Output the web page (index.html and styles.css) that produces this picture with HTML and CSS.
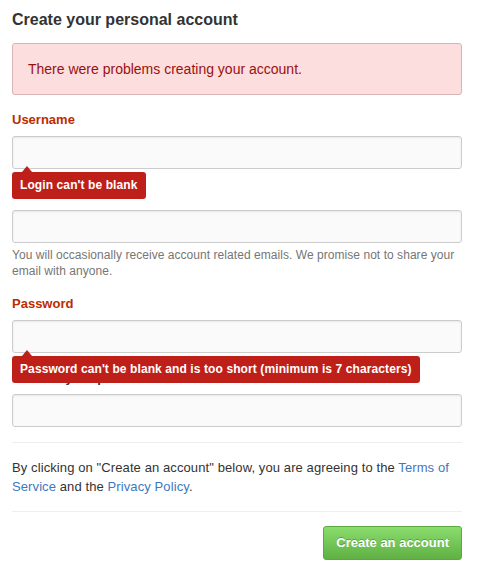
FILE: index.html
```html
<!DOCTYPE html>
<html lang="en">
<head>
<meta charset="utf-8">
<title>Create your personal account</title>
<link rel="stylesheet" href="styles.css">
</head>
<body>
<div class="page">
  <h2 class="title">Create your personal account</h2>
  <div class="flash">There were problems creating your account.</div>

  <div class="field">
    <label class="label label-error" for="user">Username</label>
    <div class="control">
      <input class="input" id="user" type="text">
      <div class="error-tip">Login can't be blank</div>
    </div>
  </div>

  <div class="field">
    <label class="label" for="email">Email Address</label>
    <div class="control">
      <input class="input" id="email" type="text">
    </div>
    <p class="note">You will occasionally receive account related emails. We promise not to share your email with anyone.</p>
  </div>

  <div class="field">
    <label class="label label-error" for="pass">Password</label>
    <div class="control">
      <input class="input" id="pass" type="password">
      <div class="error-tip">Password can't be blank and is too short (minimum is 7 characters)</div>
    </div>
  </div>

  <div class="field">
    <label class="label" for="confirm">Confirm your password</label>
    <div class="control">
      <input class="input" id="confirm" type="password">
    </div>
  </div>

  <hr class="rule">
  <p class="terms">By clicking on "Create an account" below, you are agreeing to the <a href="#">Terms of Service</a> and the <a href="#">Privacy Policy</a>.</p>
  <hr class="rule">

  <div class="actions">
    <button class="btn-primary" type="button">Create an account</button>
  </div>
</div>
</body>
</html>
```

FILE: styles.css
```css
html, body {
  margin: 0;
  padding: 0;
  background: #fff;
}

body {
  font-family: "Liberation Sans", Helvetica, Arial, sans-serif;
  font-size: 14px;
  color: #333;
}

.page {
  width: 450px;
  padding: 10px 0 0 12px;
}

.title {
  margin: 0 0 13px;
  font-size: 16px;
  line-height: 20px;
  font-weight: bold;
  color: #333;
}

.flash {
  padding: 15px;
  font-size: 14px;
  line-height: 20px;
  color: #991111;
  background: #fcdede;
  border: 1px solid #d8b4b4;
  border-radius: 3px;
  margin-bottom: 15px;
}

.field + .field {
  margin-top: 15px;
}

.label {
  display: block;
  font-size: 13px;
  line-height: 20px;
  font-weight: bold;
  color: #333;
  margin-bottom: 6px;
}

.label-error {
  color: #bd2c00;
}

.control {
  position: relative;
}

.input {
  display: block;
  box-sizing: border-box;
  width: 100%;
  height: 33px;
  margin: 0;
  padding: 6px 8px;
  font: inherit;
  background: #fafafa;
  border: 1px solid #ccc;
  border-radius: 3px;
  box-shadow: inset 0 1px 2px rgba(0, 0, 0, 0.075);
  outline: none;
}

.error-tip {
  position: absolute;
  top: calc(100% + 3px);
  left: 0;
  z-index: 2;
  padding: 5px 8px;
  font-size: 12px;
  line-height: 17px;
  font-weight: bold;
  letter-spacing: 0.1px;
  color: #fff;
  white-space: nowrap;
  background: #bf1f19;
  border-radius: 3px;
}

.error-tip::before {
  content: "";
  position: absolute;
  top: -6px;
  left: 10px;
  border-left: 5px solid transparent;
  border-right: 5px solid transparent;
  border-bottom: 6px solid #bf1f19;
}

.note {
  margin: 4px 0 0;
  font-size: 12px;
  line-height: 16px;
  letter-spacing: 0.05px;
  color: #767676;
}

.rule {
  margin: 15px 0;
  border: 0;
  border-top: 1px solid #eee;
  height: 0;
}

.terms {
  margin: 0;
  font-size: 13px;
  line-height: 19px;
  letter-spacing: 0.1px;
  color: #333;
}

.terms a {
  color: #4078c0;
  text-decoration: none;
}

.actions {
  display: flex;
  justify-content: flex-end;
  margin-top: -1px;
}

.btn-primary {
  margin: 0;
  padding: 6px 12px;
  font-family: inherit;
  font-size: 13px;
  line-height: 20px;
  font-weight: bold;
  color: #fff;
  text-shadow: 0 -1px 0 rgba(0, 0, 0, 0.25);
  background: linear-gradient(#8add6d, #60b044);
  border: 1px solid #5ca941;
  border-radius: 3px;
  cursor: pointer;
}
```
